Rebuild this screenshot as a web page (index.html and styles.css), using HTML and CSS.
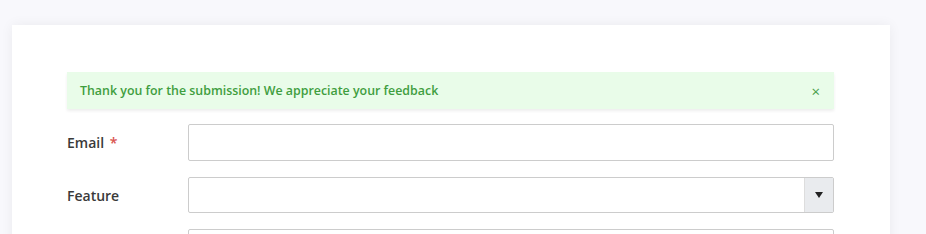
FILE: index.html
```html
<!DOCTYPE html>
<html lang="en">
<head>
  <meta charset="UTF-8">
  <title>Feedback</title>
  <link rel="stylesheet" href="styles.css">
</head>
<body>
  <div class="card">
    <div class="alert">
      <span class="alert-text">Thank you for the submission! We appreciate your feedback</span>
      <span class="alert-close">&times;</span>
    </div>

    <div class="form-row">
      <label class="form-label">Email <span class="required">*</span></label>
      <input class="form-input" type="text">
    </div>

    <div class="form-row">
      <label class="form-label">Feature</label>
      <div class="select-box">
        <div class="select-value"></div>
        <div class="select-arrow">
          <svg width="8" height="6" viewBox="0 0 8 6"><path d="M0 0 H8 L4 6 Z" fill="#222"/></svg>
        </div>
      </div>
    </div>

    <div class="form-row">
      <label class="form-label"></label>
      <input class="form-input" type="text">
    </div>
  </div>
</body>
</html>
```

FILE: styles.css
```css
body {
  margin: 0;
  padding: 25px 36px 0 12px;
  background: #f8f8fc;
  font-family: "Open Sans", "Noto Sans", sans-serif;
  color: #333;
  overflow: hidden;
}
.card {
  background: white;
  padding: 47px 56px 20px 55px;
  box-shadow: 0 0 12px rgba(0, 0, 0, 0.06);
}
.alert {
  display: flex;
  justify-content: space-between;
  align-items: center;
  height: 37px;
  padding: 0 14px 0 13px;
  background: #e9fce9;
  box-shadow: 0 2px 3px rgba(0, 0, 0, 0.07);
  margin-bottom: 15px;
}
.alert-text {
  font-size: 12.4px;
  font-weight: 600;
  color: #3f9e3f;
}
.alert-close {
  font-size: 15px;
  color: #4a9e4a;
}
.form-row {
  display: flex;
  align-items: center;
  margin-bottom: 16px;
}
.form-label {
  width: 121px;
  flex-shrink: 0;
  font-size: 14px;
  font-weight: 600;
  color: #3a3a3a;
}
.required {
  color: #d9534f;
  margin-left: 2px;
}
.form-input {
  flex: 1;
  height: 37px;
  box-sizing: border-box;
  border: 1px solid #ccc;
  border-radius: 2px;
  margin: 0;
}
.select-box {
  flex: 1;
  display: flex;
  height: 36px;
  box-sizing: border-box;
  border: 1px solid #ccc;
  border-radius: 2px;
}
.select-value {
  flex: 1;
}
.select-arrow {
  width: 28px;
  display: flex;
  align-items: center;
  justify-content: center;
  background: #e9ebee;
  border-left: 1px solid #ddd;
}
```
